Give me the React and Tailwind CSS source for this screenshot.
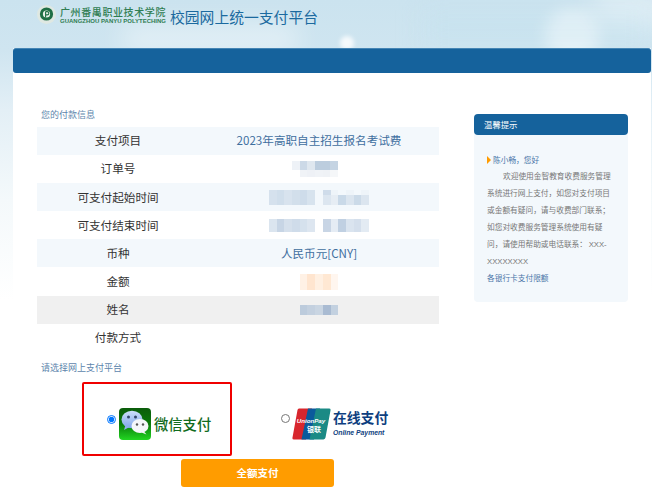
const CJK = "font-['Noto_Sans_CJK_SC','Liberation_Sans',sans-serif]";

function Mosaic({ cells, w = 7.7, h, className = "" }) {
  return (
    <div className={"flex " + className}>
      {cells.map((c, i) => (
        <div key={i} style={{ width: w, height: h, background: c }} />
      ))}
    </div>
  );
}

function Row({ label, shade, children }) {
  const bg = shade === "blue" ? "bg-[#f3f8fc]" : shade === "gray" ? "bg-[#f0f0f0]" : "bg-white";
  return (
    <div className={"flex h-[28.1px] items-center " + bg}>
      <div className="w-[162px] text-center text-[#333333]">{label}</div>
      <div className="flex flex-1 justify-center text-[#3f6f9f]">{children}</div>
    </div>
  );
}

function Logo() {
  return (
    <svg width="19" height="22" viewBox="0 0 19 22" className="shrink-0">
      <circle cx="9.5" cy="10.5" r="9.5" fill="#dfe8e2" />
      <circle cx="9.5" cy="10" r="6.6" fill="#1f6e45" />
      <circle cx="9.5" cy="10" r="3.6" fill="#e8f0ea" />
      <path d="M8.6 7.5v6M8.6 7.6h1.6a1.6 1.6 0 0 1 0 3.3H8.6" fill="none" stroke="#1f6e45" strokeWidth="1.1" />
    </svg>
  );
}

function WeChat() {
  return (
    <svg width="32" height="32" viewBox="0 0 32 32" className="shrink-0">
      <defs>
        <linearGradient id="wg" x1="0" y1="0" x2="0" y2="1">
          <stop offset="0" stopColor="#0b5c0b" />
          <stop offset="0.5" stopColor="#0a7a0a" />
          <stop offset="1" stopColor="#22d622" />
        </linearGradient>
        <linearGradient id="wb" x1="0" y1="0" x2="0" y2="1">
          <stop offset="0" stopColor="#cfe0fb" />
          <stop offset="1" stopColor="#7fa5ea" />
        </linearGradient>
      </defs>
      <rect width="32" height="32" rx="4" fill="url(#wg)" />
      <ellipse cx="13" cy="11.5" rx="10.5" ry="8.8" fill="url(#wb)" />
      <path d="M6.5 17l-1.5 5 5.5-3z" fill="#8fb0ec" />
      <ellipse cx="21" cy="18" rx="8.5" ry="7" fill="#f4f6fa" />
      <path d="M25 23.5l2.5 3-5-2z" fill="#f4f6fa" />
      <circle cx="9.5" cy="9" r="1.5" fill="#33476b" />
      <circle cx="16.5" cy="9" r="1.5" fill="#33476b" />
      <circle cx="18" cy="16.5" r="1.2" fill="#555" />
      <circle cx="24" cy="16.5" r="1.2" fill="#555" />
    </svg>
  );
}

function UnionPay() {
  return (
    <svg width="39" height="32" viewBox="0 0 39 32" className="shrink-0">
      <path d="M7 0.5h13L14 31.5H2a1.6 1.6 0 0 1-1.5-2L5.5 2A2 2 0 0 1 7 .5z" fill="#d8262d" />
      <path d="M16 0.5h12L22 31.5H9.5z" fill="#0b5a9c" />
      <path d="M24 0.5h13a1.6 1.6 0 0 1 1.5 2L33.5 29.5a2.4 2.4 0 0 1-2 2H17.500z" fill="#1b8a85" />
      <text x="19" y="14.500" textAnchor="middle" fill="#fff" fontSize="6.200" fontWeight="700" fontStyle="italic" fontFamily="Liberation Sans">UnionPay</text>
      <text x="22" y="24" textAnchor="middle" fill="#fff" fontSize="7" fontWeight="700" fontFamily="Noto Sans CJK SC">银联</text>
    </svg>
  );
}

export default function App() {
  return (
    <div className={"relative h-[489px] w-full overflow-hidden bg-[linear-gradient(180deg,#cbe3ef_0px,#cfe5f0_50px,#e3eff6_110px,#f4f9fb_200px,#ffffff_300px)] " + CJK}>
      {/* clouds behind the header */}
      <div className="absolute left-[120px] top-[24px] h-[30px] w-[180px] rounded-full bg-white/40 blur-md" />
      <div className="absolute left-[545px] top-[10px] h-[50px] w-[55px] rounded-full bg-white/60 blur-sm" />
      <div className="absolute left-[590px] top-[-10px] h-[40px] w-[80px] rounded-full bg-white/40 blur-md" />
      <div className="absolute left-[340px] top-[36px] h-[14px] w-[14px] rounded-full bg-white/80 blur-[2px]" />
      <div className="absolute right-0 top-[10px] h-[40px] w-[230px] bg-[#bfe2ef]/30 blur-md" />

      <div className="relative">
        <header className="flex h-[48px] items-start pl-[37px] pt-[4px]">
          <Logo />
          <div className="ml-[4px] w-[110px] pt-[2px]">
            <div className="whitespace-nowrap text-[10px] font-medium leading-[12px] tracking-[0.6px] text-[#2f7d52]">广州番禺职业技术学院</div>
            <div className="whitespace-nowrap font-['Liberation_Sans',sans-serif] text-[6px] font-bold leading-[7px] text-[#2f7d52]">GUANGZHOU PANYU POLYTECHING</div>
          </div>
          <div className="whitespace-nowrap text-[14.8px] leading-[26px] text-[#1b6a9f]">校园网上统一支付平台</div>
        </header>

        <main className="ml-[13px] mr-[1px] h-[441px] bg-white">
          <div className="h-[25px] rounded-[3px] border-t border-t-[#4585b4] bg-[#15629c]" />
          <div className="flex">
            <section className="ml-[24px] w-[402px]">
              <h2 className="mt-[35px] pl-[4px] text-[9px] font-normal leading-[13px] text-[#5d86ad]">您的付款信息</h2>
              <div className="mt-[6px] text-[11.6px]">
                <Row label="支付项目" shade="blue">2023年高职自主招生报名考试费</Row>
                <Row label="订单号">
                  <div className="mr-[8px] flex flex-col">
                    <Mosaic h={9} cells={["#eef2f7", "#ccd9e7", "#dfe7ef", "#bccdde", "#bccdde", "#c5d4e3"]} />
                    <Mosaic h={7} cells={["#ffffff", "#f0f3f7", "#eef1f6", "#f0f3f7", "#eff2f6", "#f5f7f9"]} />
                  </div>
                </Row>
                <Row label="可支付起始时间" shade="blue">
                  <div className="flex gap-[8px]">
                    <Mosaic h={15} cells={["#d5e1ed", "#d0deeb", "#d8e3ee", "#d2dfeb", "#cedcea", "#d7e3ee"]} />
                    <div className="flex flex-col">
                      <Mosaic h={5} cells={["#cfdcea", "#eef4f9", "#f3f8fc", "#eef4f9", "#f3f8fc", "#eef4f9"]} />
                      <Mosaic h={10} cells={["#dce6f0", "#e6edf4", "#c9d9e8", "#dbe5ef", "#cbdae8", "#dbe5ef"]} />
                    </div>
                  </div>
                </Row>
                <Row label="可支付结束时间">
                  <div className="flex gap-[8px]">
                    <Mosaic h={13} cells={["#dbe5ef", "#c7d5e5", "#d5e0ec", "#cfdcea", "#d5e1ed", "#dde6f0"]} />
                    <Mosaic h={13} cells={["#c8d5e5", "#e5ecf4", "#c0d0e2", "#dae4ef", "#d4dfec", "#e3ebf3"]} />
                  </div>
                </Row>
                <Row label="币种" shade="blue">人民币元[CNY]</Row>
                <Row label="金额">
                  <Mosaic h={16} cells={["#fff1e5", "#ffe5cf", "#fff0e2", "#ffe8d3", "#fff6ef"]} />
                </Row>
                <Row label="姓名" shade="gray">
                  <Mosaic h={10} cells={["#bccbdc", "#c3d0df", "#c9d5e2", "#a9bbd2", "#c3d1e0"]} />
                </Row>
                <Row label="付款方式" />
              </div>
              <h2 className="mt-[9px] pl-[4px] text-[9px] font-normal leading-[13px] text-[#5d86ad]">请选择网上支付平台</h2>
              <div className="mt-[8px] flex items-start">
                <div className="ml-[45px] flex h-[74px] w-[150px] items-start rounded-[2px] border-2 border-[#f00000] pl-[23px] pt-[24px]">
                  <input type="radio" name="pay" defaultChecked className="mt-[7px] h-[9px] w-[9px] shrink-0" />
                  <div className="ml-[3px]"><WeChat /></div>
                  <span className="ml-[3px] whitespace-nowrap text-[14.3px] font-medium leading-[32px] text-[#116b1c]">微信支付</span>
                </div>
                <div className="ml-[49px] mt-[26px] flex items-start">
                  <input type="radio" name="pay" className="mt-[6px] h-[9px] w-[9px] shrink-0" />
                  <div className="ml-[2px]"><UnionPay /></div>
                  <div className="ml-[2px] mt-[-2px]">
                    <div className="whitespace-nowrap text-[13.8px] font-bold leading-[22px] text-[#0f3f80]">在线支付</div>
                    <div className="whitespace-nowrap font-['Liberation_Sans',sans-serif] text-[6.8px] font-bold italic leading-[9px] text-[#0f3f80]">Online Payment</div>
                  </div>
                </div>
              </div>
              <button className="ml-[144px] mt-[3px] block h-[28px] w-[153px] rounded-[3px] bg-[#ff9c00] text-[10.5px] font-bold text-white">全额支付</button>
            </section>
            <aside className="ml-[35px] mt-[41px] h-[188px] w-[154px] rounded-[4px] bg-[#f3f8fc]">
              <div className="flex h-[21px] items-center rounded-[4px] bg-[#15629c] pl-[10px] text-[8.4px] text-white">温馨提示</div>
              <div className="px-[13px] pt-[16.5px] text-[7.7px] leading-[16.9px] text-[#777777]">
                <div className="relative text-[#4a76a8]">
                  <span className="absolute left-[0px] top-[4px] h-0 w-0 border-y-[4.5px] border-l-[4px] border-y-transparent border-l-[#ff9c00]" />
                  <span className="ml-[6px]">陈小畅，您好</span>
                </div>
                <p className="indent-[16px]">欢迎使用金智教育收费服务管理系统进行网上支付，如您对支付项目或金额有疑问，请与收费部门联系；如您对收费服务管理系统使用有疑问，请使用帮助或电话联系： <span className="font-['Liberation_Sans',sans-serif] leading-[0]">XXX-XXXXXXXX</span></p>
                <div className="text-[#4a76a8]">各银行卡支付限额</div>
              </div>
            </aside>
          </div>
        </main>
      </div>
    </div>
  );
}
